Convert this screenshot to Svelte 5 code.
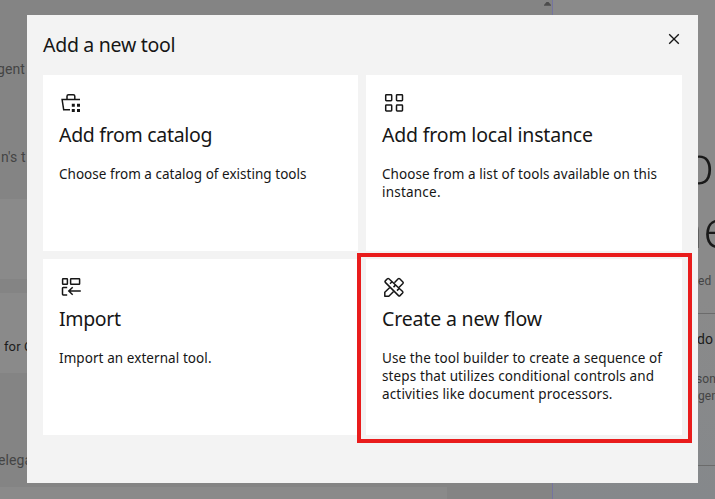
<script>
  const cards = [
    { icon: 'catalog', title: 'Add from catalog', width: 153.5, lines: [['Choose from a catalog of existing tools', 247.5]] },
    { icon: 'grid', title: 'Add from local instance', width: 211, lines: [['Choose from a list of tools available on this', 275], ['instance.', 58.5]] },
    { icon: 'import', title: 'Import', width: 62, lines: [['Import an external tool.', 152.5]] },
    { icon: 'flow', title: 'Create a new flow', width: 160, marked: true, lines: [['Use the tool builder to create a sequence of', 280], ['steps that utilizes conditional controls and', 272], ['activities like document processors.', 230.5]] }
  ];

  // Tracks the letters so that a line takes its intended measure.
  function fit(node, width) {
    const natural = node.getBoundingClientRect().width;
    node.style.letterSpacing = `${(width - natural) / (node.textContent.length - 1)}px`;
  }
</script>

<div class="page">
  <div class="backdrop">
    <div class="left">
      <div class="band a"></div>
      <div class="band b"></div>
      <div class="band c"></div>
      <div class="band d"></div>
      <div class="band e"></div>
      <div class="band f"></div>
    </div>
    <div class="right"></div>
    <span class="note" style:left="-3px" style:top="61px">gent</span>
    <span class="note" style:left="1px" style:top="149px">n's t</span>
    <span class="note dark" style:left="4px" style:top="338px">for C</span>
    <span class="note" style:left="-2px" style:top="452px">elega</span>
    <svg class="arrow" width="7" height="5" viewBox="0 0 7 5"><path d="M0 4.8V4l2.5-3h2L7 4v.8z" fill="#4c4c4c" /></svg>
    <span class="huge" style:left="682px" style:top="131px">p</span>
    <span class="huge" style:left="671px" style:top="195px">ne</span>
    <span class="note small" style:left="694px" style:top="273px">ted</span>
    <span class="rule" style:top="313px"></span>
    <span class="note dark wide" style:left="697px" style:top="331px">do</span>
    <span class="note small" style:left="696px" style:top="371px">sona</span>
    <span class="note small" style:left="698px" style:top="388px">gent</span>
    <span class="rule" style:top="465px"></span>
  </div>

  <div class="modal" role="dialog" aria-label="Add a new tool">
    <header>
      <h2><span use:fit={132.5}>Add a new tool</span></h2>
      <button aria-label="Close">
        <svg width="12" height="12" viewBox="0 0 12 12"><path d="M1.2 1.2l9.6 9.6M10.8 1.2l-9.6 9.6" stroke="#161616" stroke-width="1.35" /></svg>
      </button>
    </header>
    <div class="grid">
      {#each cards as card}
        <section class:marked={card.marked}>
          <svg class="icon" width="24" height="24" viewBox="0 0 24 24" fill="none" stroke="#161616" stroke-width="1.5">
            {#if card.icon === 'catalog'}
              <path d="M21 8.500H3.100l1.600 10.300h6.300M8 8.200V5.200Q8 3.700 9.500 3.700h4.800q1.500 0 1.500 1.500v3" />
              <path d="M12.800 12.800h3v3h-3zM18 12.800h3v3h-3zM12.800 18h3v3h-3zM18 18h3v3h-3z" fill="#161616" stroke="none" />
            {:else if card.icon === 'grid'}
              <rect x="3.7" y="3.7" width="6" height="6" rx=".7" />
              <rect x="14.5" y="3.7" width="6" height="6" rx=".7" />
              <rect x="3.7" y="14" width="6" height="6" rx=".7" />
              <rect x="14.5" y="14" width="6" height="6" rx=".7" />
            {:else if card.icon === 'import'}
              <rect x="3.6" y="3.7" width="4.8" height="5.5" rx=".5" />
              <rect x="11.600" y="3.7" width="9" height="5.5" rx=".5" />
              <path d="M8.2 12.600H4.200q-.7 0-.7.7v6q0 .7.7.7h4M21.800 16H10M13.700 12.200L9.800 16l3.900 3.800" />
            {:else}
              <path d="M6.9 3.800q-.8-.7-1.500 0L3.300 5.900q-.7.7 0 1.500l13.200 13.200q.8.7 1.500 0l2.600-2.600q.7-.8 0-1.500z" stroke-linejoin="round" />
              <path d="M7.800 12.500L2.800 17.300v4h4l4.800-4.800M12.400 7.700l3.800-3.900q.8-.7 1.500 0l3.200 3.200q.7.700 0 1.500l-4 4M13.500 10.100l-2 2M17 13.600l-2 2M10 6.700L8 8.700" stroke-linejoin="round" />
            {/if}
          </svg>
          <h3><span use:fit={card.width}>{card.title}</span></h3>
          <p>
            {#each card.lines as [text, width]}
              <span class="line"><span use:fit={width}>{text}</span></span>
            {/each}
          </p>
        </section>
      {/each}
    </div>
  </div>
</div>

<style>
  .page {
    position: relative;
    width: 715px;
    height: 499px;
    overflow: hidden;
    box-sizing: border-box;
    padding: 15px 17px 16px 27px;
    background: #8a8a8a;
    font-family: "Noto Sans", "Liberation Sans", sans-serif;
    color: #161616;
  }
  .backdrop { position: absolute; inset: 0; display: flex; }
  .left { width: 552px; border-right: 1px solid #7474a0; background: #848484; }
  .right { flex: 1; background: linear-gradient(#8a8a8a 60%, #85888b); }
  .a { height: 199px; }
  .b { height: 80px; background: #8a8a8a; }
  .c { height: 14px; }
  .d { height: 80px; background: #8a8a8a; }
  .e { height: 114px; }
  .f { height: 12px; width: 447px; background: #8a8a8a; }
  .note { position: absolute; font-family: Roboto, sans-serif; font-size: 14px; line-height: 17px; color: #444; white-space: nowrap; letter-spacing: .1px; }
  .dark { color: #1c1c1c; font-size: 13px; }
  .wide { font-size: 14px; }
  .small { font-size: 12px; line-height: 16px; }
  .huge { position: absolute; font-family: "Open Sans", Roboto, sans-serif; font-weight: 300; font-size: 54px; line-height: 64px; color: #191919; }
  .rule { position: absolute; left: 698px; right: 0; height: 1px; background: #6b6b6b; }
  .arrow { position: absolute; left: 544px; top: 1px; }
  .modal { position: relative; height: 468px; box-sizing: border-box; padding: 0 16px; background: #f3f3f3; }
  header { display: flex; justify-content: space-between; height: 60px; }
  h2, h3 { margin: 0; font-size: 19.5px; font-weight: 400; line-height: 26px; white-space: nowrap; }
  h2 { padding-top: 17px; }
  button { display: flex; width: 12px; height: 12px; margin: 18px 2px 0 0; padding: 0; border: 0; background: none; }
  .grid { display: grid; grid-template-columns: 315px 316px; grid-template-rows: 176px 176px; gap: 8px; }
  section { position: relative; box-sizing: border-box; padding: 16px; background: #fff; }
  .icon { display: block; }
  h3 { margin-top: 7px; }
  p { margin: 17px 0 0; font-size: 13.5px; line-height: 18px; }
  .line { display: block; white-space: nowrap; }
  .marked::after { content: ""; position: absolute; top: -6px; right: -10px; bottom: -8px; left: -9px; border: 4px solid #e91c1c; }
</style>
